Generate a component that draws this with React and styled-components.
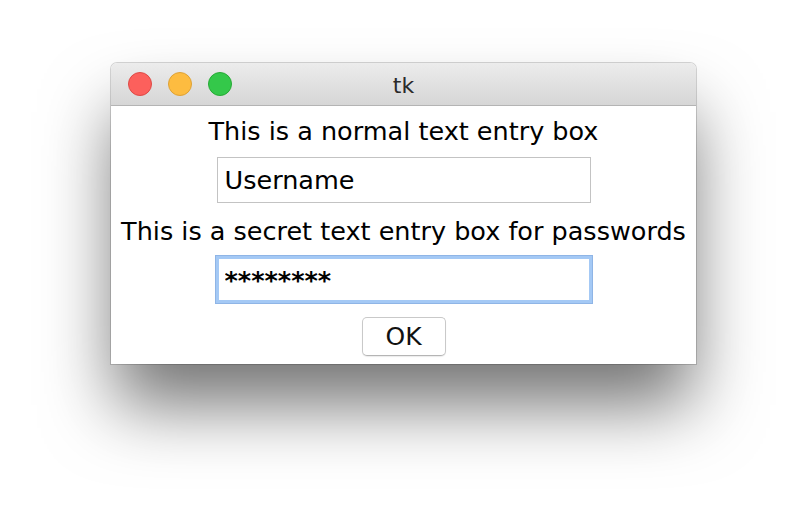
import React from "react";
import styled, { createGlobalStyle } from "styled-components";

const Global = createGlobalStyle`
  html, body { margin: 0; padding: 0; background: #ffffff; }
  body { width: 808px; height: 524px; overflow: hidden; font-family: "DejaVu Sans", "Liberation Sans", sans-serif; }
`;

const Stage = styled.div`
  padding: 63px 0 0 111px;
`;

const Window = styled.div`
  width: 585px;
  height: 301px;
  border-radius: 6px 6px 0 0;
  background: #ffffff;
  box-shadow: 0 45px 70px -4px rgba(0, 0, 0, 0.55), 0 0 0 1px rgba(0, 0, 0, 0.16);
  display: flex;
  flex-direction: column;
  overflow: hidden;
`;

const TitleBar = styled.div`
  height: 43px;
  flex: none;
  box-sizing: border-box;
  background: linear-gradient(#ececec, #d6d6d6);
  border-bottom: 1px solid #b4b4b4;
  display: flex;
  align-items: center;
  position: relative;
  padding-left: 17px;
  gap: 16px;
`;

const Light = styled.span`
  width: 24px;
  height: 24px;
  box-sizing: border-box;
  border-radius: 50%;
  background: ${(p) => p.$fill};
  border: 1px solid ${(p) => p.$stroke};
`;

const Title = styled.div`
  position: absolute;
  left: 0;
  right: 0;
  top: 0;
  bottom: 0;
  display: flex;
  align-items: center;
  justify-content: center;
  font-size: 22px;
  color: #2b2b2b;
  padding-top: 2px;
`;

const Content = styled.div`
  flex: 1;
  display: flex;
  flex-direction: column;
  align-items: center;
  padding-top: 10px;
`;

const Label = styled.div`
  font-size: 25.5px;
  color: #000;
  line-height: 30px;
  height: 30px;
  white-space: nowrap;
  margin-top: ${(p) => p.$gap || 0}px;
`;

const Entry = styled.input`
  display: block;
  box-sizing: border-box;
  width: ${(p) => (p.$focus ? "378px" : "374px")};
  height: ${(p) => (p.$focus ? "49px" : "46px")};
  margin: ${(p) => (p.$focus ? "9px 0 0" : "11px 0 0")};
  padding: 0 0 0 ${(p) => (p.$focus ? "9px" : "7px")};
  font-family: "DejaVu Sans", "Liberation Sans", sans-serif;
  font-size: 25.5px;
  color: #000;
  background: #fff;
  outline: none;
  border: ${(p) => (p.$focus ? "1px solid #8fb5e6" : "1px solid #c3c3c3")};
  box-shadow: ${(p) => (p.$focus ? "0 0 0 3px #a4c9f5 inset" : "none")};
  border-radius: 0;
  font-weight: ${(p) => (p.$focus ? 700 : 400)};
`;

const Button = styled.button`
  display: block;
  margin-top: 13px;
  width: 84px;
  height: 39px;
  box-sizing: border-box;
  background: #fff;
  border: 1px solid #c9c9c9;
  border-bottom-color: #b5b5b5;
  border-radius: 5px;
  box-shadow: 0 1px 1px rgba(0, 0, 0, 0.08);
  font-family: "DejaVu Sans", "Liberation Sans", sans-serif;
  font-size: 25px;
  color: #111;
  padding: 0;
`;

export default function App() {
  return (
    <Stage>
      <Global />
      <Window>
        <TitleBar>
          <Light $fill="#fc605c" $stroke="#de4a46" />
          <Light $fill="#fdbc40" $stroke="#dea236" />
          <Light $fill="#34c84a" $stroke="#27aa35" />
          <Title>tk</Title>
        </TitleBar>
        <Content>
          <Label>This is a normal text entry box</Label>
          <Entry readOnly defaultValue="Username" />
          <Label $gap={13}>This is a secret text entry box for passwords</Label>
          <Entry readOnly $focus defaultValue="********" />
          <Button>OK</Button>
        </Content>
      </Window>
    </Stage>
  );
}
